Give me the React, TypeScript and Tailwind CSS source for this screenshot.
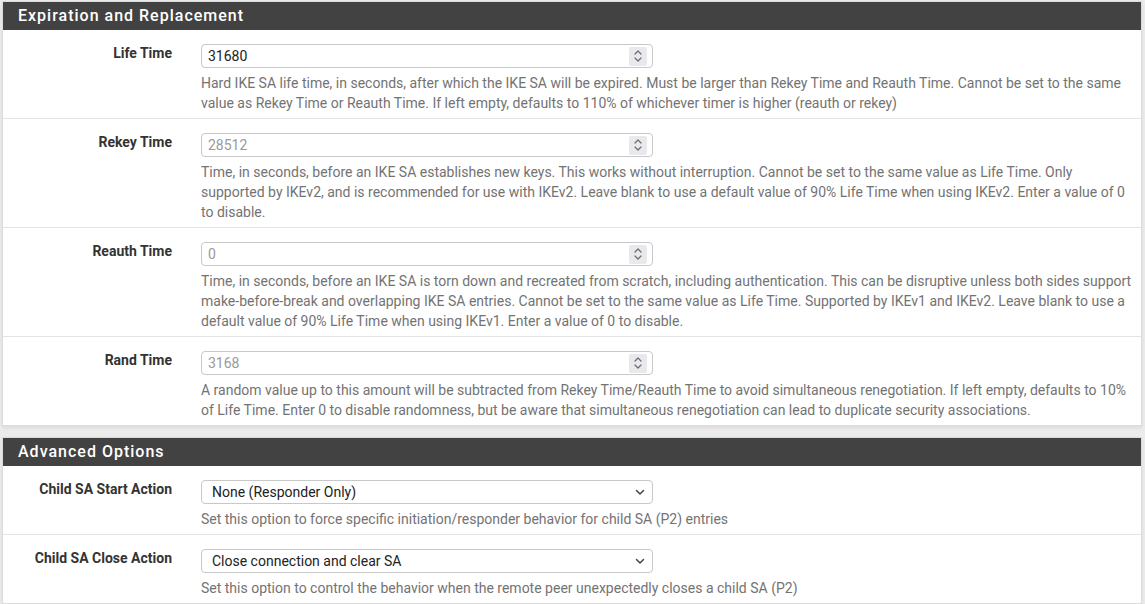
import React from 'react';

type Row = {
    label: string;
    kind: 'number' | 'select';
    value: string;
    placeholder?: boolean;
    help: string;
};

const expiration: Row[] = [
    {
        label: 'Life Time',
        kind: 'number',
        value: '31680',
        help: 'Hard IKE SA life time, in seconds, after which the IKE SA will be expired. Must be larger than Rekey Time and Reauth Time. Cannot be set to the same value as Rekey Time or Reauth Time. If left empty, defaults to 110% of whichever timer is higher (reauth or rekey)',
    },
    {
        label: 'Rekey Time',
        kind: 'number',
        value: '28512',
        placeholder: true,
        help: 'Time, in seconds, before an IKE SA establishes new keys. This works without interruption. Cannot be set to the same value as Life Time. Only supported by IKEv2, and is recommended for use with IKEv2. Leave blank to use a default value of 90% Life Time when using IKEv2. Enter a value of 0 to disable.',
    },
    {
        label: 'Reauth Time',
        kind: 'number',
        value: '0',
        placeholder: true,
        help: 'Time, in seconds, before an IKE SA is torn down and recreated from scratch, including authentication. This can be disruptive unless both sides support make-before-break and overlapping IKE SA entries. Cannot be set to the same value as Life Time. Supported by IKEv1 and IKEv2. Leave blank to use a default value of 90% Life Time when using IKEv1. Enter a value of 0 to disable.',
    },
    {
        label: 'Rand Time',
        kind: 'number',
        value: '3168',
        placeholder: true,
        help: 'A random value up to this amount will be subtracted from Rekey Time/Reauth Time to avoid simultaneous renegotiation. If left empty, defaults to 10% of Life Time. Enter 0 to disable randomness, but be aware that simultaneous renegotiation can lead to duplicate security associations.',
    },
];

const advanced: Row[] = [
    {
        label: 'Child SA Start Action',
        kind: 'select',
        value: 'None (Responder Only)',
        help: 'Set this option to force specific initiation/responder behavior for child SA (P2) entries',
    },
    {
        label: 'Child SA Close Action',
        kind: 'select',
        value: 'Close connection and clear SA',
        help: 'Set this option to control the behavior when the remote peer unexpectedly closes a child SA (P2)',
    },
];

function Spinner() {
    return (
        <div className="w-[18px] h-[19px] bg-[#e9e9ed] rounded-[2px] flex items-center justify-center">
            <svg width="10" height="14" viewBox="0 0 10 14" fill="none" stroke="#6b6b6b" strokeWidth="1.2" strokeLinecap="round" strokeLinejoin="round">
                <path d="M2 5 L5 2 L8 5" />
                <path d="M2 9 L5 12 L8 9" />
            </svg>
        </div>
    );
}

function Chevron() {
    return (
        <svg width="10" height="7" viewBox="0 0 10 7" fill="none" stroke="#444" strokeWidth="1.5" strokeLinecap="round" strokeLinejoin="round">
            <path d="M1.5 1.5 L5 5 L8.5 1.5" />
        </svg>
    );
}

function FormRow({ row, last }: { row: Row; last?: boolean }) {
    return (
        <div className={`flex pt-[14px] pb-[5px] ${last ? '' : 'border-b border-[#e3e3e3]'}`}>
            <div className="w-[198px] shrink-0 pr-[29px] text-right font-bold text-[14px] leading-[20px] text-[#333] -mt-[1px]">
                {row.label}
            </div>
            <div className="w-[936px] shrink-0">
                <div className="w-[452px] h-[24px] border border-[#c8c8c8] rounded-[4px] bg-white flex items-center justify-between pl-[6px] pr-[5px]">
                    {row.kind === 'number' ? (
                        <>
                            <span className={`text-[14px] ${row.placeholder ? 'text-[#9a9a9a]' : 'text-[#222]'}`}>{row.value}</span>
                            <Spinner />
                        </>
                    ) : (
                        <>
                            <span className="text-[14px] text-[#222] pl-[4px]">{row.value}</span>
                            <div className="pr-[2px]"><Chevron /></div>
                        </>
                    )}
                </div>
                <p className="mt-[5px] text-[14px] leading-[20px] text-[#737373]">{row.help}</p>
            </div>
        </div>
    );
}

function Panel({ title, rows }: { title: string; rows: Row[] }) {
    return (
        <div className="bg-white border border-[#dcdcdc] shadow-[0_2px_4px_rgba(0,0,0,0.08)]">
            <div className="h-[28px] bg-[#424242] flex items-center pl-[15px]">
                <h2 className="text-white text-[16px] font-medium tracking-[1px]">{title}</h2>
            </div>
            {rows.map((r, i) => (
                <FormRow key={r.label} row={r} last={i === rows.length - 1} />
            ))}
        </div>
    );
}

export default function App() {
    return (
        <div className="min-h-screen bg-[#ececec] pt-[1px] pl-[2px] pr-[3px] font-['Roboto','Liberation_Sans',sans-serif]">
            <div className="flex flex-col gap-[11px]">
                <Panel title="Expiration and Replacement" rows={expiration} />
                <Panel title="Advanced Options" rows={advanced} />
            </div>
        </div>
    );
}
